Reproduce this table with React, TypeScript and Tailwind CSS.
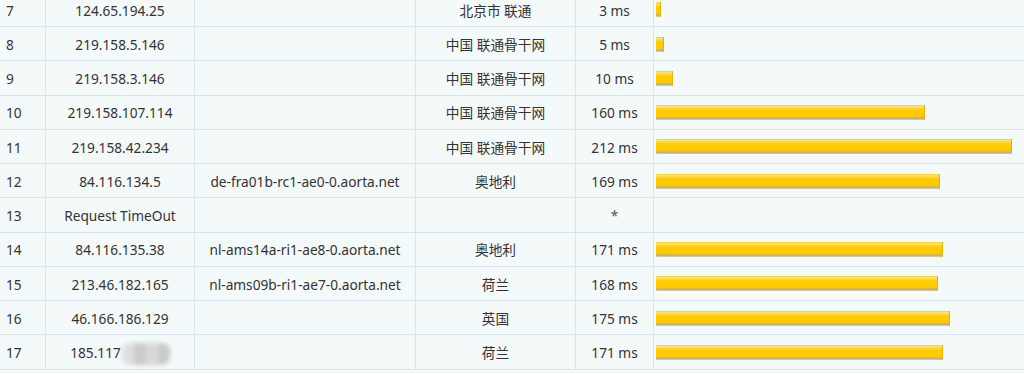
import React from 'react'

type Hop = {
  n: number
  ip: string
  host?: string
  loc?: string
  ms?: number
  blurred?: boolean
}

const hops: Hop[] = [
  { n: 7, ip: '124.65.194.25', loc: '北京市 联通', ms: 3 },
  { n: 8, ip: '219.158.5.146', loc: '中国 联通骨干网', ms: 5 },
  { n: 9, ip: '219.158.3.146', loc: '中国 联通骨干网', ms: 10 },
  { n: 10, ip: '219.158.107.114', loc: '中国 联通骨干网', ms: 160 },
  { n: 11, ip: '219.158.42.234', loc: '中国 联通骨干网', ms: 212 },
  { n: 12, ip: '84.116.134.5', host: 'de-fra01b-rc1-ae0-0.aorta.net', loc: '奥地利', ms: 169 },
  { n: 13, ip: 'Request TimeOut' },
  { n: 14, ip: '84.116.135.38', host: 'nl-ams14a-ri1-ae8-0.aorta.net', loc: '奥地利', ms: 171 },
  { n: 15, ip: '213.46.182.165', host: 'nl-ams09b-ri1-ae7-0.aorta.net', loc: '荷兰', ms: 168 },
  { n: 16, ip: '46.166.186.129', loc: '英国', ms: 175 },
  { n: 17, ip: '185.117', loc: '荷兰', ms: 171, blurred: true },
]

const cell = 'flex items-center justify-center pt-[3px] border-r border-[#dae4ef]'

function Bar({ ms }: { ms: number }) {
  return (
    <div
      className="h-[15px] rounded-[1px] bg-[linear-gradient(to_bottom,#efbf00_0px,#ffe777_1px,#ffd93a_3px,#ffcc00_5px,#ffc800_12px,#b3a88c_13px,#d4cfc0_15px)] shadow-[inset_-1px_0_0_#e2b400]"
      style={{ width: Math.max(4, Math.round(ms * 1.68)) }}
    />
  )
}

export default function App() {
  return (
    <div
      className="w-[1024px] h-[374px] overflow-hidden bg-[#f4f9fa] text-[#333] text-[13.7px]"
      style={{ fontFamily: '"Noto Sans", "Noto Sans CJK SC", sans-serif' }}
    >
      <div className="-mt-[7.27px]">
        {hops.map((h) => (
          <div
            key={h.n}
            className="grid grid-cols-[46px_149px_221px_160px_78px_1fr] h-[34.27px] border-b border-[#dae4ef]"
          >
            <div className="flex items-center pl-[6px] pt-[3px] border-r border-[#dae4ef]">{h.n}</div>
            <div className={cell}>
              {h.ip}
              {h.blurred && (
                <span className="inline-flex ml-[1px] h-[22px] w-[48px] blur-[2px] rounded-[8px] overflow-hidden">
                  <span className="w-[12px] bg-[#dedede]" />
                  <span className="w-[12px] bg-[#cbcbcb]" />
                  <span className="w-[12px] bg-[#d8d8d8]" />
                  <span className="w-[12px] bg-[#cacaca]" />
                </span>
              )}
            </div>
            <div className={cell}>{h.host}</div>
            <div className={cell}>{h.loc}</div>
            <div className={cell}>{h.ms !== undefined ? `${h.ms} ms` : <span className="text-[#555]">*</span>}</div>
            <div className="flex items-center pl-[2px] pt-[1px]">{h.ms !== undefined && <Bar ms={h.ms} />}</div>
          </div>
        ))}
      </div>
    </div>
  )
}
